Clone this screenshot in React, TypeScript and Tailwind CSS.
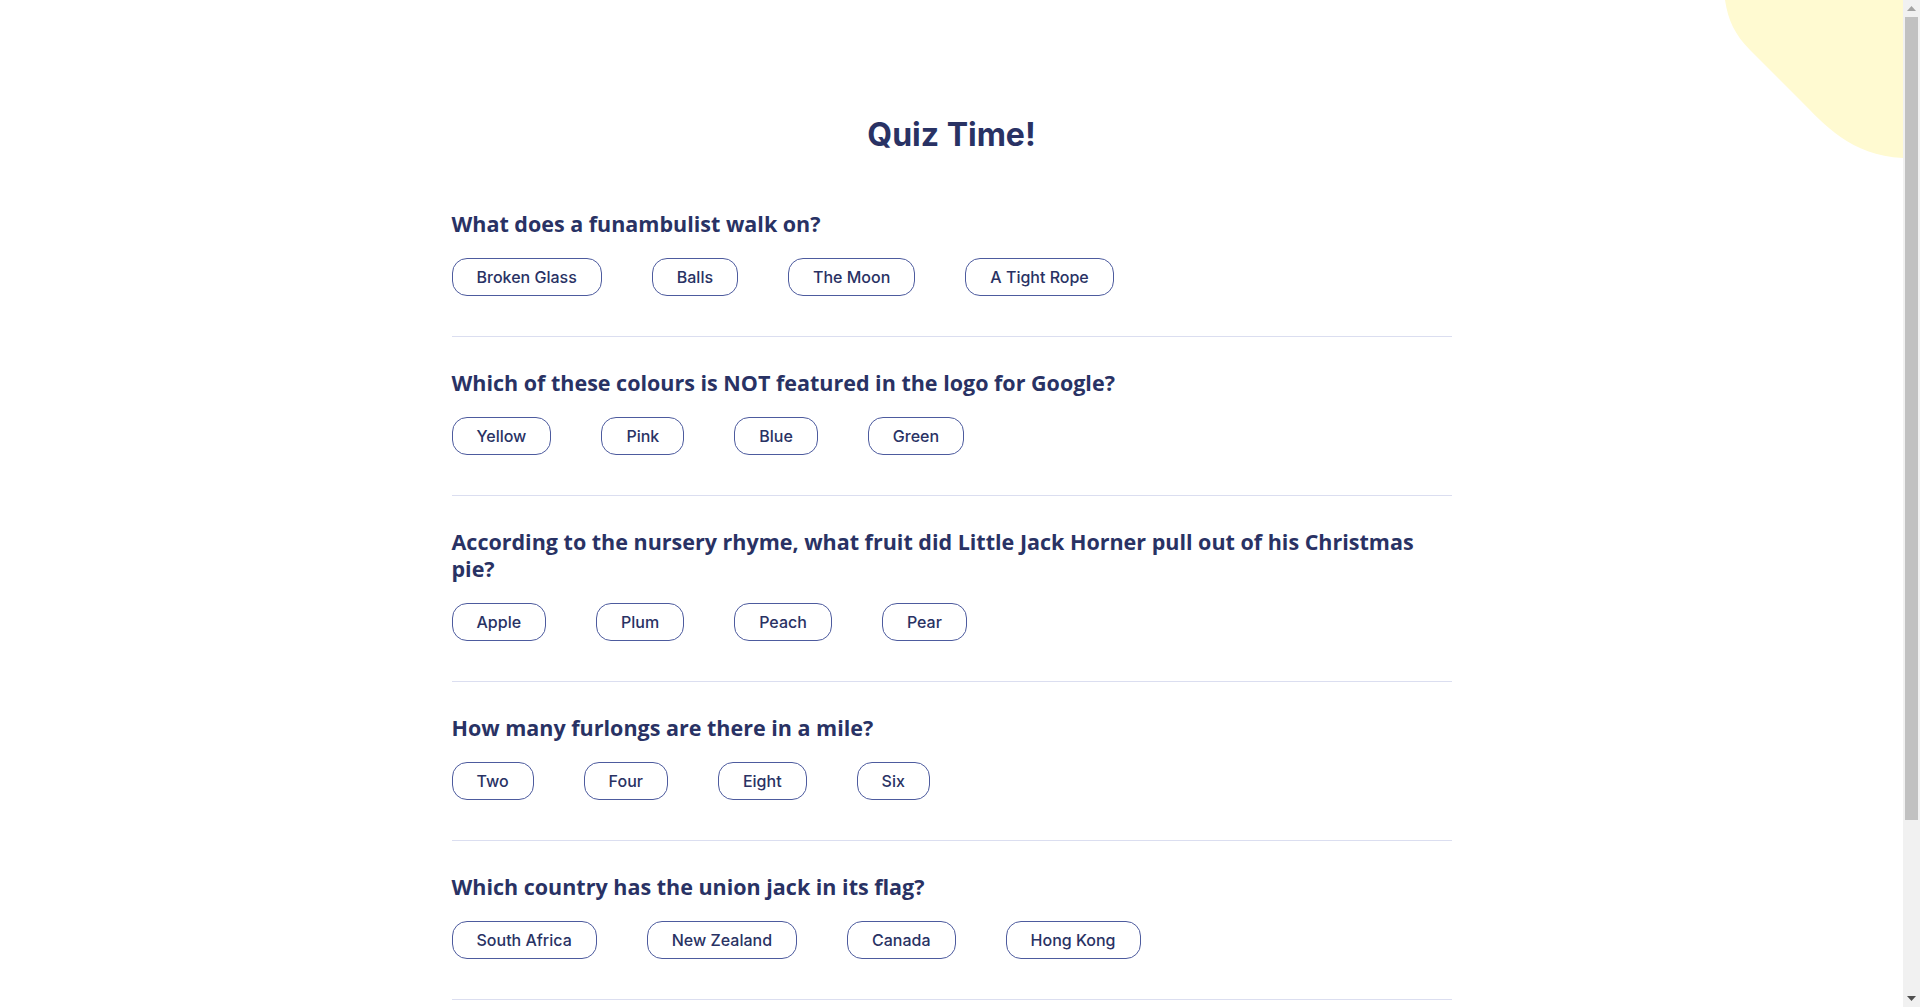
import React from "react";

type Q = { q: string; a: string[] };

const questions: Q[] = [
  { q: "What does a funambulist walk on?", a: ["Broken Glass", "Balls", "The Moon", "A Tight Rope"] },
  { q: "Which of these colours is NOT featured in the logo for Google?", a: ["Yellow", "Pink", "Blue", "Green"] },
  {
    q: "According to the nursery rhyme, what fruit did Little Jack Horner pull out of his Christmas pie?",
    a: ["Apple", "Plum", "Peach", "Pear"],
  },
  { q: "How many furlongs are there in a mile?", a: ["Two", "Four", "Eight", "Six"] },
  { q: "Which country has the union jack in its flag?", a: ["South Africa", "New Zealand", "Canada", "Hong Kong"] },
];

function Scrollbar() {
  return (
    <aside className="flex h-full w-[17px] shrink-0 flex-col items-center bg-[#f1f1f1]">
      <div className="flex h-[17px] w-full items-center justify-center">
        <svg width="9" height="5" viewBox="0 0 9 5" aria-hidden="true">
          <path d="M4.5 0 L9 5 L0 5 Z" fill="#a3a3a3" />
        </svg>
      </div>
      <div className="h-[803px] w-[13px] bg-[#c1c1c1]" />
      <div className="flex-1" />
      <div className="flex h-[17px] w-full items-center justify-center">
        <svg width="9" height="5" viewBox="0 0 9 5" aria-hidden="true">
          <path d="M0 0 L9 0 L4.5 5 Z" fill="#505050" />
        </svg>
      </div>
    </aside>
  );
}

export default function App() {
  return (
    <div className="flex h-screen overflow-hidden bg-white">
      <div className="relative flex-1 overflow-hidden bg-white text-[#293264]">
        <svg
          className="absolute right-0 top-0"
          width="178"
          height="160"
          viewBox="0 0 178 160"
          aria-hidden="true"
        >
          <path d="M0 0 C3 20 10 35 25 50 L75 100 C100 125 125 155 178 158 L178 0 Z" fill="#FFFAD1" />
        </svg>
        <main className="relative mx-auto w-[1000px] pt-[115px] pb-[120px]">
          <h1 className="mb-[23px] text-center font-['Inter',sans-serif] text-[32px] font-bold leading-10 text-[#293264]">
            Quiz Time!
          </h1>
          {questions.map((item) => (
            <section key={item.q} className="border-b border-[#DBDEF0] pt-8 pb-10">
              <h2 className="font-['Open_Sans',sans-serif] text-[21.5px] font-bold leading-[27px] text-[#293264]">
                {item.q}
              </h2>
              <div className="mt-[21px] flex gap-[50px]">
                {item.a.map((ans) => (
                  <button
                    key={ans}
                    className="h-[38px] rounded-[15px] border border-[#4D5B9E] bg-white px-6 font-['Inter',sans-serif] text-[16px] font-medium text-[#293264]"
                  >
                    {ans}
                  </button>
                ))}
              </div>
            </section>
          ))}
        </main>
      </div>
      <Scrollbar />
    </div>
  );
}
